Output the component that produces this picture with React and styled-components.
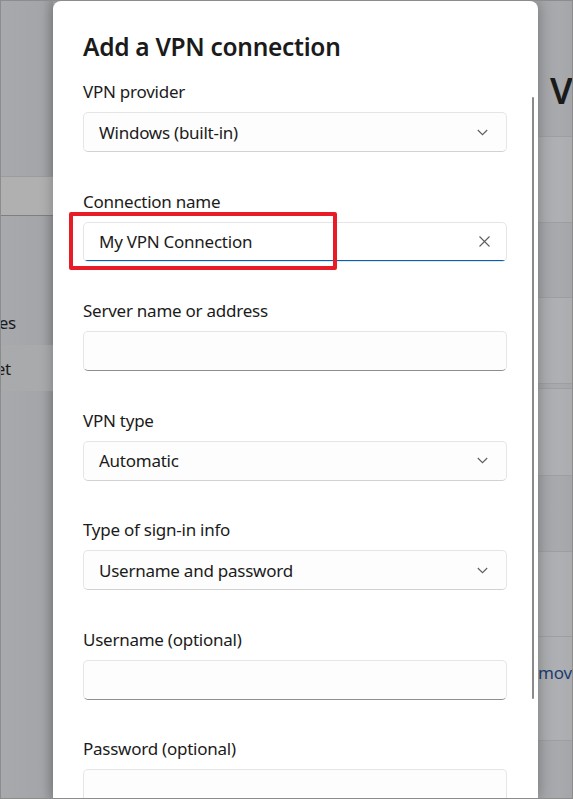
import React from "react";
import styled, { createGlobalStyle } from "styled-components";

const GlobalStyle = createGlobalStyle`
  html, body {
    margin: 0;
    padding: 0;
    background: #ffffff;
  }
  * {
    box-sizing: border-box;
  }
`;

const SFrame = styled.div`
  width: 573px;
  height: 799px;
  border: 1px solid #8c8c8c;
  display: flex;
  overflow: hidden;
  font-family: "Segoe UI", "Noto Sans", "Open Sans", sans-serif;
  color: #1b1b1b;
  background: #a6a8ab;
`;

const SSidebar = styled.div`
  width: 52px;
  flex-shrink: 0;
  display: flex;
  flex-direction: column;
  background: linear-gradient(90deg, #a7a9ac 0%, #a3a5a8 80%, #96989b 100%);
`;

const SSideBand = styled.div`
  height: ${(p) => p.h}px;
  flex-shrink: 0;
  background: ${(p) => p.bg || "transparent"};
  border-top: ${(p) => (p.lineTop ? `1px solid ${p.lineTop}` : "none")};
  border-bottom: ${(p) => (p.lineBottom ? `1px solid ${p.lineBottom}` : "none")};
  display: flex;
  align-items: center;
  justify-content: flex-end;
  padding-right: ${(p) => p.pr || 0}px;
  font-size: 17px;
  letter-spacing: -0.2px;
  color: #1a1a1a;
  white-space: nowrap;
`;

const SDialog = styled.div`
  position: relative;
  width: 485px;
  flex-shrink: 0;
  background: #ffffff;
  border-radius: 8px 8px 0 0;
  box-shadow: 0 0 14px rgba(0, 0, 0, 0.28);
  padding: 29px 31px 0 30px;
  overflow: hidden;
  z-index: 1;
`;

const STitle = styled.h1`
  margin: 0 0 17px;
  font-size: 24.5px;
  line-height: 33px;
  font-weight: 600;
  color: #1b1b1b;
  letter-spacing: -0.3px;
`;

const SGroup = styled.div`
  position: relative;
  margin-bottom: 37.5px;
`;

const SLabel = styled.label`
  display: block;
  font-size: 17px;
  letter-spacing: -0.25px;
  line-height: 24px;
  margin-bottom: 8px;
  color: #1b1b1b;
`;

const SField = styled.div`
  height: 40px;
  display: flex;
  align-items: center;
  padding: 0 ${(p) => (p.active ? 16.5 : 18.5)}px 0 15px;
  background: #fdfdfd;
  border: 1px solid #e5e5e5;
  border-bottom-color: ${(p) => (p.active ? "#e5e5e5" : p.input ? "#8e8e8e" : "#d2d2d2")};
  border-radius: 5px;
  font-size: 17px;
  letter-spacing: -0.25px;
  color: #1b1b1b;
  position: relative;
  overflow: hidden;

  ${(p) =>
    p.active &&
    `
    background: #ffffff;
    &::after {
      content: "";
      position: absolute;
      left: 0;
      right: 0;
      bottom: -1px;
      height: 2px;
      background: #005fb8;
    }
  `}
`;

const SValue = styled.span`
  flex: 1;
  white-space: nowrap;
`;

const SHighlight = styled.div`
  position: absolute;
  left: -14px;
  top: 22px;
  width: 268px;
  height: 58px;
  border: 4px solid #e81c27;
  border-radius: 2px;
  pointer-events: none;
`;

const SScrollbar = styled.div`
  position: absolute;
  left: 479px;
  top: 96px;
  width: 2px;
  height: 602px;
  border-radius: 1px;
  background: #8a8a8a;
`;

const SPane = styled.div`
  flex: 1;
  display: flex;
  flex-direction: column;
  background: linear-gradient(90deg, #a2a4a7 0%, #a8aaad 60%, #a3a5a8 100%);
`;

const SPaneHeader = styled.div`
  height: 135px;
  flex-shrink: 0;
  padding: 70px 0 0 12px;
  font-size: 36px;
  line-height: 40px;
  font-weight: 600;
  color: #1a1a1a;
  white-space: nowrap;
`;

const SPaneRow = styled.div`
  height: ${(p) => p.h}px;
  flex-shrink: 0;
  background: ${(p) => (p.light ? "rgba(255,255,255,0.08)" : "transparent")};
  border-top: 1px solid #9c9ea1;
  padding-top: ${(p) => p.pt || 0}px;
  font-size: 17px;
  letter-spacing: -0.2px;
  line-height: 24px;
  color: #1d3d70;
  white-space: nowrap;
`;

const Chevron = () => (
  <svg width="11" height="7" viewBox="0 0 11 7" fill="none">
    <path d="M0.8 1 L5.5 5.7 L10.2 1" stroke="#5d5d5d" strokeWidth="1.1" />
  </svg>
);

const ClearIcon = () => (
  <svg width="11" height="11" viewBox="0 0 11 11" fill="none">
    <path d="M0.5 0.5 L10.5 10.5 M10.5 0.5 L0.5 10.5" stroke="#5d5d5d" strokeWidth="1.1" />
  </svg>
);

const fields = [
  { label: "VPN provider", value: "Windows (built-in)", kind: "select" },
  { label: "Connection name", value: "My VPN Connection", kind: "active" },
  { label: "Server name or address", value: "", kind: "input" },
  { label: "VPN type", value: "Automatic", kind: "select" },
  { label: "Type of sign-in info", value: "Username and password", kind: "select" },
  { label: "Username (optional)", value: "", kind: "input" },
  { label: "Password (optional)", value: "", kind: "input" },
];

const paneRows = [
  { h: 86, light: true },
  { h: 75 },
  { h: 86, light: true },
  { h: 5 },
  { h: 87, light: true },
  { h: 76 },
  { h: 85, light: true },
  { h: 104, light: true, pt: 24, text: "mov" },
  { h: 60 },
];

export default function App() {
  return (
    <>
      <GlobalStyle />
      <SFrame>
        <SSidebar>
          <SSideBand h={175} />
          <SSideBand h={40} bg="#b0b0b1" lineTop="#9c9c9d" lineBottom="#7d7f82" />
          <SSideBand h={84} />
          <SSideBand h={45} pr={37}>
            es
          </SSideBand>
          <SSideBand h={46} bg="#a9aaac" pr={42}>
            et
          </SSideBand>
        </SSidebar>

        <SDialog>
          <STitle>Add a VPN connection</STitle>
          {fields.map((f) => (
            <SGroup key={f.label}>
              <SLabel>{f.label}</SLabel>
              <SField active={f.kind === "active"} input={f.kind === "input"}>
                <SValue>{f.value}</SValue>
                {f.kind === "select" && <Chevron />}
                {f.kind === "active" && <ClearIcon />}
              </SField>
              {f.kind === "active" && <SHighlight />}
            </SGroup>
          ))}
          <SScrollbar />
        </SDialog>

        <SPane>
          <SPaneHeader>V</SPaneHeader>
          {paneRows.map((r, i) => (
            <SPaneRow key={i} h={r.h} light={r.light} pt={r.pt}>
              {r.text}
            </SPaneRow>
          ))}
        </SPane>
      </SFrame>
    </>
  );
}
